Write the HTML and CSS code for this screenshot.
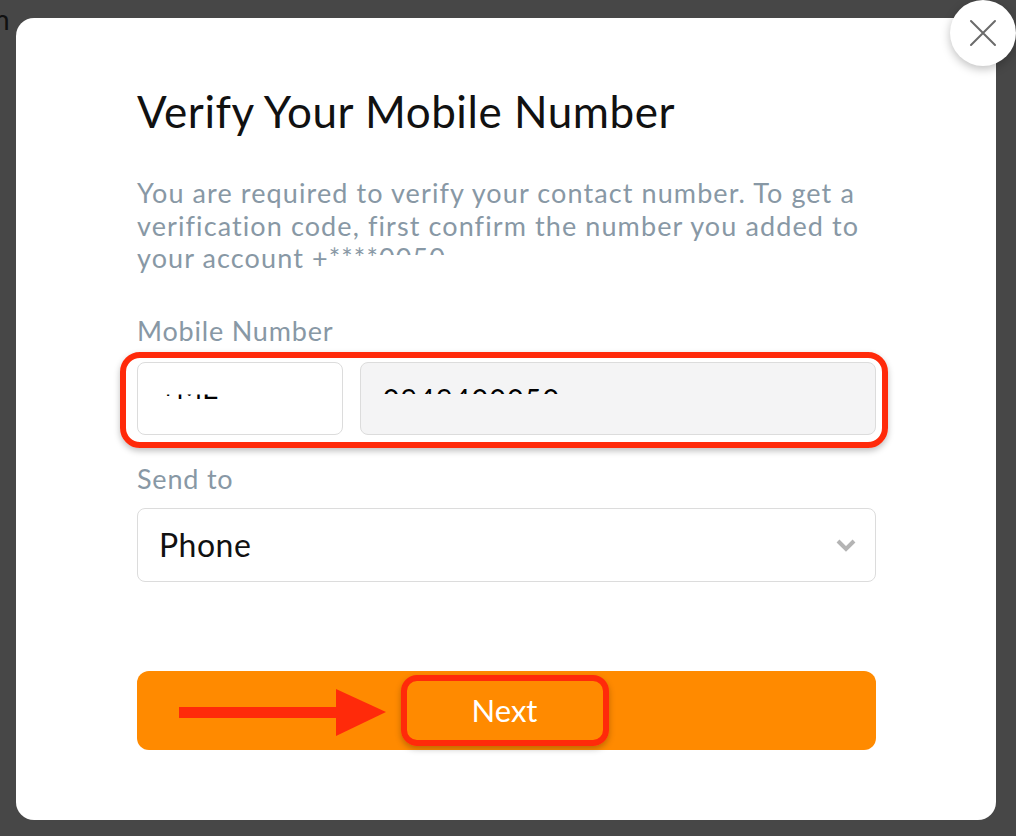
FILE: index.html
```html
<!DOCTYPE html>
<html lang="en">
<head>
  <meta charset="UTF-8">
  <meta name="viewport" content="width=device-width, initial-scale=1.0">
  <title>Verify Your Mobile Number</title>
  <link rel="stylesheet" href="styles.css">
</head>
<body>
  <div class="page-text">n</div>

  <div class="modal">
    <button class="close-button" aria-label="Close">
      <svg width="30" height="30" viewBox="0 0 30 30">
        <path d="M3 3 L27 27 M27 3 L3 27" stroke="#6b6b6b" stroke-width="2" stroke-linecap="round" fill="none"/>
      </svg>
    </button>

    <h1>Verify Your Mobile Number</h1>
    <p class="intro">You are required to verify your contact number. To get a verification code, first confirm the number you added to your account +****<span class="masked-inline">0050</span></p>

    <label class="field-label mobile-label">Mobile Number</label>
    <div class="phone-row">
      <div class="code-box"><span class="masked masked-low">+ME</span></div>
      <div class="number-box"><span class="masked masked-high">0949400050</span></div>
    </div>

    <label class="field-label send-label">Send to</label>
    <div class="select-box">
      <span>Phone</span>
      <svg width="20" height="14" viewBox="0 0 20 14">
        <path d="M2 3 L10 11 L18 3" stroke="#b4b4b4" stroke-width="4" fill="none"/>
      </svg>
    </div>

    <div class="next-button">
      <span class="next-label">Next</span>
      <svg class="arrow" width="210" height="50" viewBox="0 0 210 50">
        <rect x="0" y="19" width="160" height="11" fill="#ff2a0a"/>
        <polygon points="157,1 207,24 157,48" fill="#ff2a0a"/>
      </svg>
    </div>
  </div>
</body>
</html>
```

FILE: styles.css
```css
* {
  box-sizing: border-box;
  margin: 0;
  padding: 0;
}
body {
  font-family: Lato, 'Open Sans', sans-serif;
  background-color: #474747;
  width: 1016px;
  height: 836px;
  overflow: hidden;
  padding: 18px 20px 16px 16px;
  position: relative;
}
.page-text {
  position: absolute;
  left: -6px;
  top: 2px;
  font-size: 28px;
  color: #111;
}
.modal {
  position: relative;
  background: #fff;
  border-radius: 18px;
  width: 980px;
  height: 802px;
  padding: 67px 120px 0 121px;
}
.close-button {
  position: absolute;
  right: -20px;
  top: -18px;
  width: 66px;
  height: 66px;
  border-radius: 50%;
  border: none;
  background: #fff;
  box-shadow: 0 3px 10px rgba(0, 0, 0, 0.25);
  display: flex;
  align-items: center;
  justify-content: center;
}
h1 {
  font-size: 44px;
  font-weight: 400;
  color: #111;
  line-height: 52px;
  letter-spacing: 0.55px;
}
.intro {
  margin-top: 40px;
  font-size: 27px;
  line-height: 32.5px;
  letter-spacing: 1.1px;
  color: #8898a5;
}
.masked-inline {
  display: inline-block;
  vertical-align: top;
  height: 13px;
  overflow: hidden;
}
.field-label {
  display: block;
  font-size: 27px;
  letter-spacing: 0.8px;
  color: #8898a5;
  line-height: 30px;
}
.mobile-label {
  margin-top: 41px;
}
.phone-row {
  margin-top: 16px;
  display: flex;
  gap: 17px;
  position: relative;
}
.phone-row::after {
  content: '';
  position: absolute;
  left: -17px;
  right: -12px;
  top: -10px;
  bottom: -13px;
  border: 6px solid #ff2a0a;
  border-radius: 20px;
  box-shadow: 0 3px 6px rgba(0, 0, 0, 0.25);
}
.code-box, .number-box {
  height: 73px;
  border: 1px solid #dcdcdc;
  border-radius: 8px;
  position: relative;
  overflow: hidden;
}
.code-box {
  width: 206px;
  background: #fff;
}
.number-box {
  flex: 1;
  background: #f4f4f5;
}
.masked {
  position: absolute;
  overflow: hidden;
  font-size: 28px;
  color: #000;
  line-height: 34px;
}
.masked-high {
  left: 22px;
  top: 19px;
  height: 12px;
  letter-spacing: 1.5px;
}
.masked-low {
  left: 22px;
  top: 8px;
  height: 30px;
  clip-path: inset(24px 0 0 0);
}
.send-label {
  margin-top: 29px;
}
.select-box {
  margin-top: 14px;
  height: 74px;
  border: 1px solid #dcdcdc;
  border-radius: 8px;
  display: flex;
  align-items: center;
  justify-content: space-between;
  padding: 0 19px 0 21px;
  font-size: 32px;
  letter-spacing: 0.5px;
  color: #111;
}
.next-button {
  margin-top: 89px;
  height: 79px;
  background: #ff8a00;
  border-radius: 12px;
  position: relative;
  display: flex;
  align-items: center;
  justify-content: center;
}
.next-label {
  font-size: 31px;
  color: #fff;
  position: relative;
  width: 208px;
  height: 71px;
  display: flex;
  align-items: center;
  justify-content: center;
  margin-left: -4px;
}
.next-label::after {
  content: '';
  position: absolute;
  inset: 0;
  border: 6px solid #ff2a0a;
  border-radius: 16px;
  box-shadow: 0 3px 6px rgba(0, 0, 0, 0.25);
}
.arrow {
  position: absolute;
  left: 42px;
  top: 17px;
}
```
